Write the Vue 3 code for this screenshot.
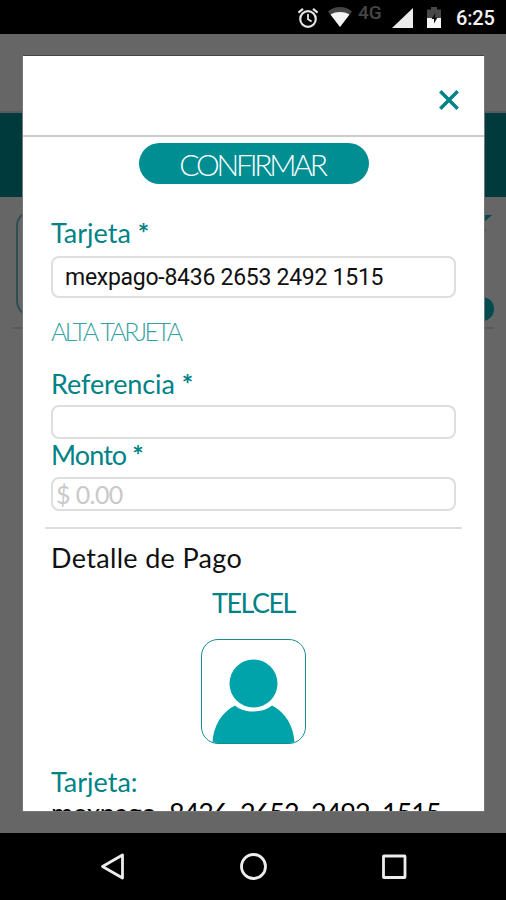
<script setup>
import { ref } from 'vue'

const card = ref('mexpago-8436 2653 2492 1515')
const reference = ref('')
const amount = ref('')
</script>

<template>
  <div class="screen">
    <header class="status">
      <svg class="alarm" viewBox="0 0 22 22" fill="none" stroke="#e4e4e4">
        <circle cx="11" cy="12" r="7.8" stroke-width="2.2" />
        <path d="M11 7v5.2l3.6 2.2" stroke-width="1.8" />
        <path d="M1.4 5.6 6 1.8M20.6 5.6 16 1.8" stroke-width="2.2" />
      </svg>
      <svg class="wifi" viewBox="0 0 24 20">
        <path d="M0 4.5C7-1.4 17-1.4 24 4.5L12 20Z" fill="#454545" />
        <path d="M2.500 7.500C8 4.2 16 4.2 21.500 7.500L12 20Z" fill="#f4f4f4" />
      </svg>
      <span class="net">4G</span>
      <svg class="signal" viewBox="0 0 21 20"><path d="M21 0V20H0Z" fill="#ececec" /></svg>
      <svg class="battery" viewBox="0 0 14 21">
        <path d="M4 0h6v2.5h4V11H0V2.5h4Z" fill="#484848" />
        <path d="M0 11h14v10H0Z" fill="#f6f6f6" />
        <path d="M8.5 5.500 4.500 12h2.500v4.500l3.500-6H8Z" fill="#111" />
      </svg>
      <span class="time">6:25</span>
    </header>

    <div class="backdrop">
      <div class="page-top"></div>
      <div class="page-band"></div>
      <div class="page-card">
        <div class="page-thumb"></div>
        <div class="page-marks">
          <svg class="corner" viewBox="0 0 20 20"><path d="M0 0h20L11 8H9z" fill="#004b4d" /><path d="M8 15h6" stroke="#4a5555" stroke-width="2" /></svg>
          <div class="dot"></div>
        </div>
      </div>
    </div>

    <nav class="nav">
      <svg viewBox="0 0 30 30"><path d="M24.5 4v23L4.500 15.500Z" /></svg>
      <svg viewBox="0 0 30 30"><circle cx="15.500" cy="15.500" r="12" /></svg>
      <svg viewBox="0 0 30 30"><rect x="4.5" y="5" width="21.5" height="21.5" rx="0.5" /></svg>
    </nav>

    <section class="modal">
      <div class="modal-head">
        <svg class="close" viewBox="0 0 22 22"><path d="M2.3 2.3 19.7 19.7M19.7 2.3 2.3 19.7" /></svg>
      </div>
      <div class="body">
        <button class="confirm">CONFIRMAR</button>
        <label class="label l-card">Tarjeta <b>*</b></label>
        <input v-model="card" class="field card" />
        <a class="add">ALTA TARJETA</a>
        <label class="label l-ref">Referencia <b>*</b></label>
        <input v-model="reference" class="field" />
        <label class="label l-amount">Monto <b>*</b></label>
        <input v-model="amount" class="field amount" placeholder="$ 0.00" />
        <hr />
        <h2>Detalle de Pago</h2>
        <h3>TELCEL</h3>
        <div class="avatar">
          <svg viewBox="0 0 103 103" fill="#00a3aa">
            <circle cx="51.5" cy="43.5" r="24" />
            <path d="M33 65.5C42 73.5 61 73.5 70 65.5C83 72 92 86 92.500 103H10.500C11 86 20 72 33 65.500Z" />
          </svg>
        </div>
        <p class="label l-detail">Tarjeta:</p>
        <p class="number"><span class="brand">mexpago-</span><span>8436</span><span>2653</span><span>2492</span><span>1515</span></p>
      </div>
    </section>
  </div>
</template>

<style>
body { margin: 0; overflow: hidden; }
</style>

<style scoped>
* { box-sizing: border-box; }
.screen {
  position: relative;
  width: 506px;
  height: 900px;
  display: flex;
  flex-direction: column;
  overflow: hidden;
  background: #666;
  font-family: Lato, "Open Sans", sans-serif;
}
.status {
  height: 34px;
  flex: none;
  display: flex;
  align-items: center;
  padding-left: 297px;
  background: #000;
  font-family: Roboto, sans-serif;
}
.alarm { width: 22px; height: 22px; margin-top: 1px; }
.wifi { width: 24px; height: 20px; margin-left: 9px; }
.net { width: 25px; margin: -8px 0 0 6px; color: #464646; font-size: 19px; font-weight: 500; line-height: 20px; }
.signal { width: 21px; height: 20px; margin: 2px 0 0 9px; }
.battery { width: 14px; height: 21px; margin: 1px 0 0 14px; }
.time { margin: 2px 0 0 15px; color: #f2f2f2; font-size: 20px; font-weight: 500; line-height: 24px; white-space: nowrap; letter-spacing: -.2px; }
.backdrop { flex: 1; background: #666; }
.page-top { height: 79px; border-bottom: 2px solid #575c60; }
.page-band { height: 84px; background: #003a3d; }
.page-card {
  height: 132px;
  display: flex;
  justify-content: space-between;
  margin: 0 12px;
  padding-top: 13px;
  border-bottom: 2px solid #5a5a5a;
}
.page-thumb { width: 105px; height: 107px; margin-left: 4px; border: 2px solid #2c5051; border-radius: 16px; }
.page-marks { display: flex; flex-direction: column; align-items: flex-end; justify-content: space-between; padding-top: 5px; padding-bottom: 6px; }
.corner { width: 20px; height: 20px; margin-right: 2px; }
.dot { width: 24px; height: 24px; border-radius: 50%; background: #004b4d; }
.nav {
  height: 67px;
  flex: none;
  display: flex;
  justify-content: center;
  gap: 110.500px;
  padding-top: 18px;
  background: #000;
}
.nav svg { width: 30px; height: 30px; fill: none; stroke: #ededed; stroke-width: 2.800; stroke-linejoin: round; }
.modal {
  position: absolute;
  left: 23px;
  top: 56px;
  width: 461px;
  height: 755px;
  overflow: hidden;
  background: #fff;
  box-shadow: 0 -1px 0 #444, 0 0 0 1px #777;
}
.modal-head { height: 81px; display: flex; justify-content: flex-end; padding: 33px 24px 0 0; border-bottom: 2px solid #ccc; }
.close { width: 22px; height: 22px; fill: none; stroke: #008286; stroke-width: 3.500; }
.body { display: flex; flex-direction: column; padding: 6px 28px 0; }
.confirm {
  width: 230px;
  height: 41px;
  flex: none;
  align-self: center;
  margin-bottom: 34px;
  padding: 0;
  border: 0;
  border-radius: 21px;
  background: #008e92;
  color: #fff;
  font: 300 30px/38px Lato, sans-serif;
  letter-spacing: -3.200px;
  text-indent: -3px;
}
.label { display: block; height: 30px; flex: none; margin: 0; color: #008286; font-size: 27px; line-height: 30px; white-space: nowrap; }
.label b { font-weight: 700; }
.l-card { margin-bottom: 8px; }
.field {
  width: 405px;
  height: 34px;
  flex: none;
  padding: 0 3px;
  border: 2px solid #dedede;
  border-radius: 8px;
  outline: 0;
  background: #fff;
  color: #111;
  font: 400 25px/28px Lato, sans-serif;
}
.card { height: 42px; padding: 0 12px 0; font: 400 23px/36px Roboto, sans-serif; letter-spacing: -.270px; }
.add { height: 30px; flex: none; margin: 18px 0 23px; color: #35a3a5; font-size: 25px; font-weight: 300; line-height: 30px; white-space: nowrap; letter-spacing: -2.550px; word-spacing: 1px; }
.l-ref { margin-bottom: 6px; letter-spacing: -.100px; }
.l-amount { margin: 1px 0 7px; letter-spacing: -.900px; }
.amount { letter-spacing: -.600px; }
.amount::placeholder { color: #c9c9c9; opacity: 1; }
hr { width: 417px; height: 2px; flex: none; align-self: center; margin: 16px 0; border: 0; background: #ddd; }
h2 { height: 30px; margin: -2px 0 0; color: #111; font-size: 27px; font-weight: 400; line-height: 30px; white-space: nowrap; letter-spacing: .330px; }
h3 { height: 30px; margin: 15px 0 21px; color: #008286; font-size: 27px; font-weight: 400; line-height: 30px; text-align: center; letter-spacing: -1.500px; }
.avatar { width: 105px; height: 105px; flex: none; align-self: center; overflow: hidden; border: 1px solid #168e91; border-radius: 17px; }
.avatar svg { display: block; width: 103px; height: 103px; }
.l-detail { margin-top: 23px; }
.number { height: 30px; display: flex; flex: none; margin: 1px 0 0; color: #000; font-size: 27px; line-height: 30px; white-space: nowrap; letter-spacing: -1px; }
.number span { width: 71px; flex: none; }
.number .brand { width: 118px; letter-spacing: -.300px; }
</style>
